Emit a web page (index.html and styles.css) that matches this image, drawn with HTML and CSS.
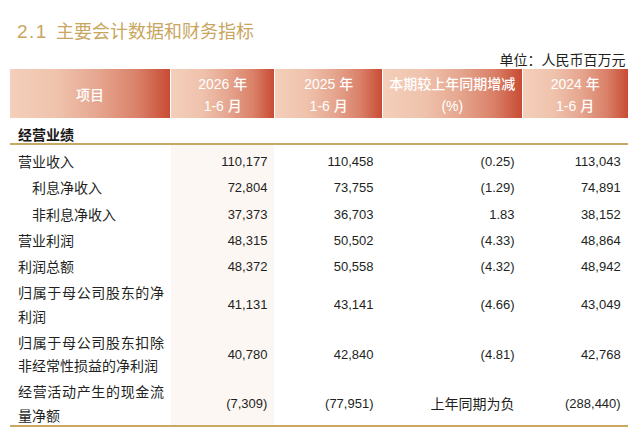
FILE: index.html
```html
<!DOCTYPE html>
<html lang="zh-CN">
<head>
<meta charset="utf-8">
<title>主要会计数据和财务指标</title>
<link rel="stylesheet" href="styles.css">
</head>
<body>
<div class="page">
  <h1 class="title"><span class="title-num">2.1</span>主要会计数据和财务指标</h1>
  <div class="unit">单位：人民币百万元</div>
  <div class="table">
    <div class="grid head">
      <div class="hc">项目</div>
      <div class="hc">2026 年<br>1-6 月</div>
      <div class="hc">2025 年<br>1-6 月</div>
      <div class="hc">本期较上年同期增减<br>(%)</div>
      <div class="hc">2024 年<br>1-6 月</div>
    </div>
    <div class="section">经营业绩</div>
    <div class="grid row">
      <div class="label">营业收入</div>
      <div class="cell cur">110,177</div>
      <div class="cell c3">110,458</div>
      <div class="cell">(0.25)</div>
      <div class="cell">113,043</div>
    </div>
    <div class="grid row">
      <div class="label sub">利息净收入</div>
      <div class="cell cur">72,804</div>
      <div class="cell c3">73,755</div>
      <div class="cell">(1.29)</div>
      <div class="cell">74,891</div>
    </div>
    <div class="grid row">
      <div class="label sub">非利息净收入</div>
      <div class="cell cur">37,373</div>
      <div class="cell c3">36,703</div>
      <div class="cell">1.83</div>
      <div class="cell">38,152</div>
    </div>
    <div class="grid row">
      <div class="label">营业利润</div>
      <div class="cell cur">48,315</div>
      <div class="cell c3">50,502</div>
      <div class="cell">(4.33)</div>
      <div class="cell">48,864</div>
    </div>
    <div class="grid row">
      <div class="label">利润总额</div>
      <div class="cell cur">48,372</div>
      <div class="cell c3">50,558</div>
      <div class="cell">(4.32)</div>
      <div class="cell">48,942</div>
    </div>
    <div class="grid row">
      <div class="label">归属于母公司股东的净利润</div>
      <div class="cell cur">41,131</div>
      <div class="cell c3">43,141</div>
      <div class="cell">(4.66)</div>
      <div class="cell">43,049</div>
    </div>
    <div class="grid row">
      <div class="label">归属于母公司股东扣除非经常性损益的净利润</div>
      <div class="cell cur">40,780</div>
      <div class="cell c3">42,840</div>
      <div class="cell">(4.81)</div>
      <div class="cell">42,768</div>
    </div>
    <div class="grid row">
      <div class="label">经营活动产生的现金流量净额</div>
      <div class="cell cur">(7,309)</div>
      <div class="cell c3">(77,951)</div>
      <div class="cell cjk">上年同期为负</div>
      <div class="cell">(288,440)</div>
    </div>
    <div class="rule"></div>
  </div>
</div>
</body>
</html>
```
FILE: styles.css
```css
html, body {
  margin: 0;
  padding: 0;
  background: #ffffff;
}

body {
  font-family: "Liberation Sans", "Noto Sans CJK SC", sans-serif;
  color: #231f1e;
  width: 632px;
  height: 428px;
  overflow: hidden;
}

.page {
  width: 632px;
}

.title {
  margin: 0;
  padding: 21px 0 0 17px;
  height: 21px;
  line-height: 21px;
  font-size: 18px;
  font-weight: 400;
  color: #c9a65f;
  font-family: "Liberation Sans", "Noto Sans CJK SC", sans-serif;
}

.title-num {
  font-size: 19px;
  letter-spacing: 1.5px;
  margin-right: 8px;
}

.unit {
  margin-top: 6.5px;
  height: 20px;
  line-height: 20px;
  font-size: 14px;
  text-align: right;
  padding-right: 6.5px;
  font-family: "Noto Sans CJK SC", sans-serif;
}

.table {
  margin: 0.5px 0 0 10px;
  width: 618px;
}

.grid {
  display: grid;
  grid-template-columns: 160px 103.3px 106.4px 138.6px 105px;
  column-gap: 1.1px;
}

.head {
  height: 49px;
}

.hc {
  box-sizing: border-box;
  height: 49px;
  padding-top: 4.6px;
  display: flex;
  align-items: center;
  justify-content: center;
  text-align: center;
  font-size: 14px;
  line-height: 21.7px;
  font-weight: 500;
  color: #ffffff;
  background: linear-gradient(to right, #f4cfba 0%, #efc2ac 30%, #e6a68f 55%, #da8068 80%, #c84b34 100%);
}

.section {
  height: 19px;
  padding: 6px 0 0 8px;
  line-height: 20px;
  font-size: 14px;
  font-weight: 700;
  color: #1a1717;
  border-bottom: 2px solid #c9a961;
  font-family: "Noto Sans CJK SC", sans-serif;
}

.row {
  margin-bottom: -2.4px;
}

.label {
  padding: 5.2px 6px 0 8px;
  font-size: 14px;
  line-height: 23.4px;
  text-align: justify;
  font-family: "Noto Sans CJK SC", sans-serif;
}

.label.sub {
  padding-left: calc(8px + 1em);
}

.cell {
  box-sizing: border-box;
  padding: 5.2px 7px 0 0;
  display: flex;
  align-items: center;
  justify-content: flex-end;
  font-size: 13px;
  line-height: 23.4px;
}

.cell.c3 {
  padding-right: 8.4px;
}

.cell.cjk {
  font-size: 14px;
  font-family: "Noto Sans CJK SC", sans-serif;
}

.cur {
  background: #fdf7f4;
}

.rule {
  position: relative;
  height: 2px;
  background: #c9a961;
}
```
